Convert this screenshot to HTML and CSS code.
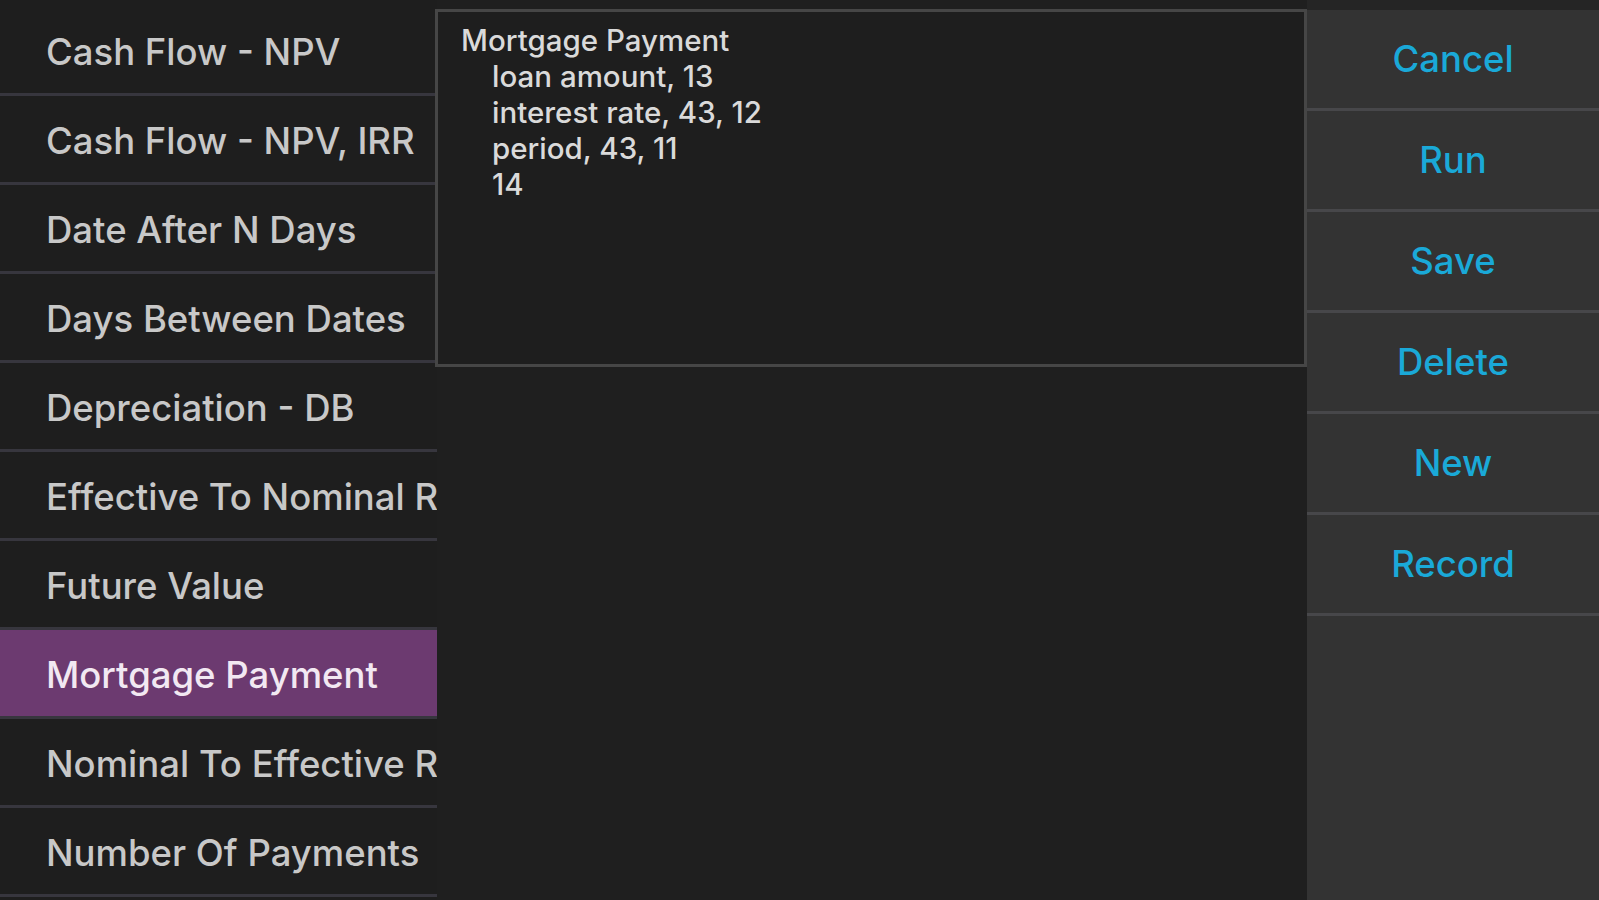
FILE: index.html
```html
<!DOCTYPE html>
<html>
<head>
<meta charset="utf-8">
<link rel="stylesheet" href="styles.css">
</head>
<body>
<div class="app">
  <div class="list">
    <div class="row">Cash Flow - NPV</div>
    <div class="row">Cash Flow - NPV, IRR</div>
    <div class="row">Date After N Days</div>
    <div class="row">Days Between Dates</div>
    <div class="row">Depreciation - DB</div>
    <div class="row">Effective To Nominal Rate</div>
    <div class="row">Future Value</div>
    <div class="row selected">Mortgage Payment</div>
    <div class="row">Nominal To Effective Rate</div>
    <div class="row">Number Of Payments</div>
  </div>
  <div class="middle">
    <div class="box">
      <div class="line">Mortgage Payment</div>
      <div class="line indent">loan amount, 13</div>
      <div class="line indent">interest rate, 43, 12</div>
      <div class="line indent">period, 43, 11</div>
      <div class="line indent">14</div>
    </div>
  </div>
  <div class="side">
    <div class="actions">
      <div class="btn">Cancel</div>
      <div class="btn">Run</div>
      <div class="btn">Save</div>
      <div class="btn">Delete</div>
      <div class="btn">New</div>
      <div class="btn">Record</div>
    </div>
  </div>
</div>
</body>
</html>
```

FILE: styles.css
```css
html, body {
  margin: 0;
  padding: 0;
  background: #1f1f1f;
  font-family: Inter, "Liberation Sans", sans-serif;
}
.app {
  display: flex;
  width: 1599px;
  height: 900px;
  overflow: hidden;
}
.list {
  width: 437px;
  flex: none;
  padding-top: 7px;
  background: #1e1e1e;
}
.row {
  height: 89px;
  box-sizing: border-box;
  padding-top: 4px;
  border-bottom: 3px solid #37363e;
  display: flex;
  align-items: center;
  padding-left: 46px;
  font-size: 36.5px;
  font-weight: 500;
  color: #c8c8c8;
  white-space: nowrap;
  overflow: hidden;
}
.row.selected {
  background: #6c3a70;
  color: #f2e8f2;
}
.middle {
  flex: 1;
  padding-top: 9px;
  margin-left: -2px;
}
.box {
  height: 342px;
  border: 3px solid #464646;
  background: #1e1e1e;
  padding: 10px 0 0 23px;
  font-size: 29.5px;
  font-weight: 500;
  color: #dadada;
}
.line {
  height: 36px;
  line-height: 36px;
  white-space: nowrap;
}
.indent {
  padding-left: 31px;
}
.side {
  width: 292px;
  flex: none;
  background: #252525;
  padding-top: 10px;
}
.actions {
  height: 890px;
  background: #333333;
}
.btn {
  height: 98px;
  border-bottom: 3px solid #47474a;
  display: flex;
  align-items: center;
  justify-content: center;
  font-size: 36.5px;
  font-weight: 500;
  color: #1aa9d8;
}
```
